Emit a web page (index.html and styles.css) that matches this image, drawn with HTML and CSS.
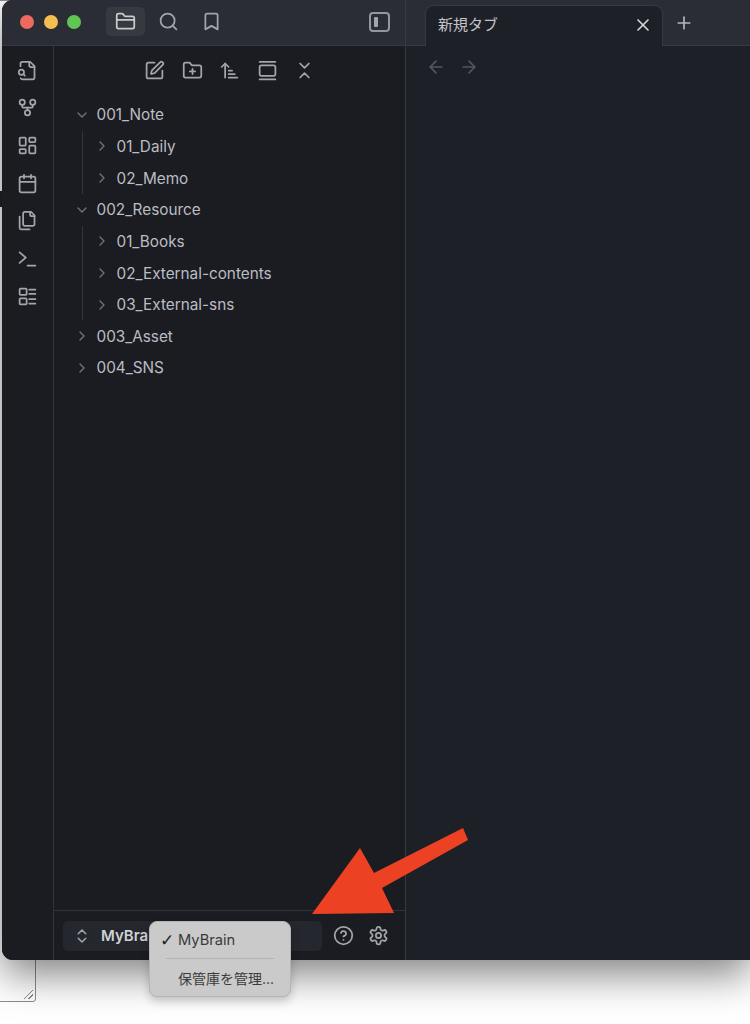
FILE: index.html
```html
<!DOCTYPE html>
<html lang="ja">
<head>
    <meta charset="UTF-8">
    <title>MyBrain - Obsidian</title>
    <link rel="stylesheet" href="styles.css">
</head>
<body>
    <svg class="defs" aria-hidden="true">
        <symbol id="i-folder" viewBox="0 0 24 24"><path d="M20 20a2 2 0 0 0 2-2V8a2 2 0 0 0-2-2h-7.9a2 2 0 0 1-1.69-.9L9.6 3.9A2 2 0 0 0 7.93 3H4a2 2 0 0 0-2 2v13a2 2 0 0 0 2 2Z"/><path d="M2 10h20"/></symbol>
        <symbol id="i-search" viewBox="0 0 24 24"><circle cx="11" cy="11" r="8"/><path d="m21 21-4.3-4.3"/></symbol>
        <symbol id="i-bookmark" viewBox="0 0 24 24"><path d="m19 21-7-4-7 4V5a2 2 0 0 1 2-2h10a2 2 0 0 1 2 2v16z"/></symbol>
        <symbol id="i-file-search" viewBox="0 0 24 24"><path d="M14 2v4a2 2 0 0 0 2 2h4"/><path d="M4.268 21a2 2 0 0 0 1.727 1H18a2 2 0 0 0 2-2V7l-5-5H6a2 2 0 0 0-2 2v3"/><path d="m9 18-1.5-1.5"/><circle cx="5" cy="14" r="3"/></symbol>
        <symbol id="i-fork" viewBox="0 0 24 24"><circle cx="12" cy="18" r="3"/><circle cx="6" cy="6" r="3"/><circle cx="18" cy="6" r="3"/><path d="M18 9v2c0 .6-.4 1-1 1H7c-.6 0-1-.4-1-1V9"/><path d="M12 12v3"/></symbol>
        <symbol id="i-dashboard" viewBox="0 0 24 24"><rect width="7" height="9" x="3" y="3" rx="1"/><rect width="7" height="5" x="14" y="3" rx="1"/><rect width="7" height="9" x="14" y="12" rx="1"/><rect width="7" height="5" x="3" y="16" rx="1"/></symbol>
        <symbol id="i-calendar" viewBox="0 0 24 24"><path d="M8 2v4"/><path d="M16 2v4"/><rect width="18" height="18" x="3" y="4" rx="2"/><path d="M3 10h18"/></symbol>
        <symbol id="i-files" viewBox="0 0 24 24"><path d="M20 7h-3a2 2 0 0 1-2-2V2"/><path d="M9 18a2 2 0 0 1-2-2V4a2 2 0 0 1 2-2h7l4 4v10a2 2 0 0 1-2 2Z"/><path d="M3 7.6v12.8A1.6 1.6 0 0 0 4.6 22h9.8"/></symbol>
        <symbol id="i-terminal" viewBox="0 0 24 24"><path d="m3 17 7-6-7-6"/><path d="M12 20h9"/></symbol>
        <symbol id="i-list" viewBox="0 0 24 24"><rect width="8" height="7" x="3" y="3" rx="1"/><rect width="8" height="7" x="3" y="14" rx="1"/><path d="M14 4h7"/><path d="M14 9h7"/><path d="M14 15h7"/><path d="M14 20h7"/></symbol>
        <symbol id="i-pen" viewBox="0 0 24 24"><path d="M12 3H5a2 2 0 0 0-2 2v14a2 2 0 0 0 2 2h14a2 2 0 0 0 2-2v-7"/><path d="M18.375 2.625a1 1 0 0 1 3 3l-9.013 9.014a2 2 0 0 1-.853.505l-2.873.84a.5.5 0 0 1-.62-.62l.84-2.873a2 2 0 0 1 .506-.852z"/></symbol>
        <symbol id="i-folder-plus" viewBox="0 0 24 24"><path d="M12 10v6"/><path d="M9 13h6"/><path d="M20 20a2 2 0 0 0 2-2V8a2 2 0 0 0-2-2h-7.9a2 2 0 0 1-1.69-.9L9.6 3.9A2 2 0 0 0 7.93 3H4a2 2 0 0 0-2 2v13a2 2 0 0 0 2 2Z"/></symbol>
        <symbol id="i-sort" viewBox="0 0 24 24"><path d="m3 8 4-4 4 4"/><path d="M7 4v16"/><path d="M11 12h4"/><path d="M11 16h7"/><path d="M11 20h10"/></symbol>
        <symbol id="i-gallery" viewBox="0 0 24 24"><path d="M3 2h18"/><rect width="18" height="12" x="3" y="6" rx="2"/><path d="M3 22h18"/></symbol>
        <symbol id="i-collapse" viewBox="0 0 24 24"><path d="m7 20 5-5 5 5"/><path d="m7 4 5 5 5-5"/></symbol>
        <symbol id="i-updown" viewBox="0 0 24 24"><path d="m7 15 5 5 5-5"/><path d="m7 9 5-5 5 5"/></symbol>
        <symbol id="i-help" viewBox="0 0 24 24"><circle cx="12" cy="12" r="10"/><path d="M9.09 9a3 3 0 0 1 5.83 1c0 2-3 3-3 3"/><path d="M12 17h.01"/></symbol>
        <symbol id="i-gear" viewBox="0 0 24 24"><path d="M12.22 2h-.44a2 2 0 0 0-2 2v.18a2 2 0 0 1-1 1.73l-.43.25a2 2 0 0 1-2 0l-.15-.08a2 2 0 0 0-2.73.73l-.22.38a2 2 0 0 0 .73 2.73l.15.1a2 2 0 0 1 1 1.72v.51a2 2 0 0 1-1 1.74l-.15.09a2 2 0 0 0-.73 2.73l.22.38a2 2 0 0 0 2.73.73l.15-.08a2 2 0 0 1 2 0l.43.25a2 2 0 0 1 1 1.73V20a2 2 0 0 0 2 2h.44a2 2 0 0 0 2-2v-.18a2 2 0 0 1 1-1.73l.43-.25a2 2 0 0 1 2 0l.15.08a2 2 0 0 0 2.73-.73l.22-.39a2 2 0 0 0-.73-2.73l-.15-.08a2 2 0 0 1-1-1.74v-.5a2 2 0 0 1 1-1.74l.15-.09a2 2 0 0 0 .73-2.73l-.22-.38a2 2 0 0 0-2.73-.73l-.15.08a2 2 0 0 1-2 0l-.43-.25a2 2 0 0 1-1-1.73V4a2 2 0 0 0-2-2z"/><circle cx="12" cy="12" r="3"/></symbol>
        <symbol id="i-right" viewBox="0 0 24 24"><path d="m9 18 6-6-6-6"/></symbol>
        <symbol id="i-down" viewBox="0 0 24 24"><path d="m6 9 6 6 6-6"/></symbol>
        <symbol id="i-x" viewBox="0 0 24 24"><path d="M18 6 6 18"/><path d="m6 6 12 12"/></symbol>
        <symbol id="i-plus" viewBox="0 0 24 24"><path d="M5 12h14"/><path d="M12 5v14"/></symbol>
        <symbol id="i-back" viewBox="0 0 24 24"><path d="m12 19-7-7 7-7"/><path d="M19 12H5"/></symbol>
        <symbol id="i-forward" viewBox="0 0 24 24"><path d="M5 12h14"/><path d="m12 5 7 7-7 7"/></symbol>
    </svg>

    <!-- window behind -->
    <div class="back-window"><span class="back-mark"></span><span class="grip"></span></div>

    <div class="window">
        <header class="titlebar">
            <div class="title-left">
                <div class="lights">
                    <span class="light red"></span>
                    <span class="light yellow"></span>
                    <span class="light green"></span>
                </div>
                <div class="tab-buttons">
                    <span class="tab-btn active"><svg class="icon i21"><use href="#i-folder"/></svg></span>
                    <span class="tab-btn"><svg class="icon i21"><use href="#i-search"/></svg></span>
                    <span class="tab-btn"><svg class="icon i21"><use href="#i-bookmark"/></svg></span>
                </div>
                <span class="side-toggle"><span class="side-toggle-bar"></span></span>
            </div>
            <div class="title-right">
                <div class="tab">
                    <span class="tab-title">新規タブ</span>
                    <svg class="icon i20 bright"><use href="#i-x"/></svg>
                </div>
                <svg class="icon i20 new-tab"><use href="#i-plus"/></svg>
            </div>
        </header>

        <div class="main">
            <nav class="ribbon">
                <svg class="icon i21"><use href="#i-file-search"/></svg>
                <svg class="icon i21"><use href="#i-fork"/></svg>
                <svg class="icon i21"><use href="#i-dashboard"/></svg>
                <svg class="icon i21"><use href="#i-calendar"/></svg>
                <svg class="icon i21"><use href="#i-files"/></svg>
                <svg class="icon i21"><use href="#i-terminal"/></svg>
                <svg class="icon i21"><use href="#i-list"/></svg>
            </nav>

            <aside class="sidebar">
                <div class="toolbar">
                    <svg class="icon i21"><use href="#i-pen"/></svg>
                    <svg class="icon i21"><use href="#i-folder-plus"/></svg>
                    <svg class="icon i21"><use href="#i-sort"/></svg>
                    <svg class="icon i21"><use href="#i-gallery"/></svg>
                    <svg class="icon i21"><use href="#i-collapse"/></svg>
                </div>

                <div class="tree">
                    <div class="row"><svg class="icon i16 chev"><use href="#i-down"/></svg>001_Note</div>
                    <div class="children">
                        <div class="row"><svg class="icon i16 chev"><use href="#i-right"/></svg>01_Daily</div>
                        <div class="row"><svg class="icon i16 chev"><use href="#i-right"/></svg>02_Memo</div>
                    </div>
                    <div class="row"><svg class="icon i16 chev"><use href="#i-down"/></svg>002_Resource</div>
                    <div class="children">
                        <div class="row"><svg class="icon i16 chev"><use href="#i-right"/></svg>01_Books</div>
                        <div class="row"><svg class="icon i16 chev"><use href="#i-right"/></svg>02_External-contents</div>
                        <div class="row"><svg class="icon i16 chev"><use href="#i-right"/></svg>03_External-sns</div>
                    </div>
                    <div class="row"><svg class="icon i16 chev"><use href="#i-right"/></svg>003_Asset</div>
                    <div class="row"><svg class="icon i16 chev"><use href="#i-right"/></svg>004_SNS</div>
                </div>

                <div class="vault-bar">
                    <div class="vault">
                        <svg class="icon i18"><use href="#i-updown"/></svg>
                        <span class="vault-name">MyBrain</span>
                    </div>
                    <svg class="icon i21"><use href="#i-help"/></svg>
                    <svg class="icon i21"><use href="#i-gear"/></svg>
                </div>
            </aside>

            <section class="content">
                <div class="nav-arrows">
                    <svg class="icon i20"><use href="#i-back"/></svg>
                    <svg class="icon i20"><use href="#i-forward"/></svg>
                </div>
            </section>
        </div>
    </div>

    <div class="menu">
        <div class="menu-item"><span class="check">✓</span>MyBrain</div>
        <div class="menu-sep"></div>
        <div class="menu-item menu-item-ja">保管庫を管理...</div>
    </div>

    <svg class="arrow" viewBox="0 0 170 100" width="170" height="100">
        <polygon points="2,86 50,20 64,45 153,0 158,12 72,60 84,85"/>
    </svg>
</body>
</html>
```

FILE: styles.css
```css
html, body {
    height: 100%;
}

body {
    margin: 0;
    position: relative;
    overflow: hidden;
    background-color: #fff;
    font-family: Inter, "Noto Sans CJK JP", sans-serif;
    font-size: 15.3px;
    color: #bcbdc2;
}

.defs {
    display: none;
}

.icon {
    display: block;
    flex: none;
    fill: none;
    stroke: #a3a5aa;
    stroke-width: 2;
    stroke-linecap: round;
    stroke-linejoin: round;
}

.i16 { width: 16px; height: 16px; }
.i18 { width: 18px; height: 18px; }
.i20 { width: 20px; height: 20px; }
.i21 { width: 21px; height: 21px; }

.bright {
    stroke: #d4d5d8;
}

/* the window behind */
.back-window {
    position: absolute;
    left: -10px;
    top: 0;
    width: 46px;
    height: 1002px;
    box-sizing: border-box;
    border: 1px solid #8d8d8d;
    border-radius: 3px;
    background-color: #fff;
}

.back-mark {
    position: absolute;
    left: 9px;
    top: 190px;
    width: 3px;
    height: 16px;
    background-color: #222;
}

.grip {
    position: absolute;
    right: 2px;
    bottom: 2px;
    width: 9px;
    height: 9px;
    background: linear-gradient(135deg, transparent 45%, #888 45%, #888 55%, transparent 55%, transparent 70%, #888 70%, #888 80%, transparent 80%);
}

.window {
    position: relative;
    margin-left: 2px;
    height: 960px;
    display: flex;
    flex-direction: column;
    overflow: hidden;
    border-radius: 11px 0 0 11px;
    background-color: #1e2028;
    box-shadow: 0 14px 40px rgba(0, 0, 0, 0.5);
}

/* title bar */
.titlebar {
    display: flex;
    height: 46px;
    flex: none;
    background-color: #2a2d35;
}

.title-left {
    width: 404px;
    box-sizing: border-box;
    display: flex;
    align-items: center;
    padding: 0 15px 2px 18px;
    border-right: 1px solid #363940;
    border-bottom: 1px solid #363940;
}

.lights {
    display: flex;
    gap: 9.5px;
}

.light {
    width: 14px;
    height: 14px;
    border-radius: 50%;
}

.red { background-color: #ee6a5f; }
.yellow { background-color: #f5bf4f; }
.green { background-color: #61c554; }

.tab-buttons {
    display: flex;
    align-items: center;
    gap: 4px;
    margin-left: 25px;
}

.tab-btn {
    width: 39px;
    height: 29px;
    display: flex;
    align-items: center;
    justify-content: center;
    border-radius: 5px;
}

.tab-btn.active {
    background-color: #363940;
}

.tab-btn.active .icon {
    stroke: #c9cacd;
}

.side-toggle {
    margin-left: auto;
    width: 21px;
    height: 20px;
    box-sizing: border-box;
    padding: 3px;
    border: 2px solid #93969c;
    border-radius: 4px;
}

.side-toggle-bar {
    display: block;
    width: 4px;
    height: 100%;
    border-radius: 1px;
    background-color: #a3a5aa;
}

.title-right {
    flex: 1;
    display: flex;
    align-items: flex-end;
    padding-left: 20px;
    border-bottom: 1px solid #363940;
}

.tab {
    width: 236px;
    height: 40px;
    margin-bottom: -1px;
    box-sizing: border-box;
    display: flex;
    align-items: center;
    justify-content: space-between;
    padding: 0 9px 3px 12px;
    border-radius: 8px 8px 0 0;
    background-color: #1e2028;
    box-shadow: 0 0 0 1px #363940;
    clip-path: inset(-1px -1px 0 -1px);
}

.tab-title {
    margin-bottom: 2px;
    font-size: 15px;
    color: #c4c5c9;
}

.new-tab {
    margin: 0 0 12px 12px;
    stroke: #b4b5b9;
}

/* body of the window */
.main {
    flex: 1;
    min-height: 0;
    display: flex;
}

.ribbon {
    width: 52px;
    flex: none;
    box-sizing: border-box;
    display: flex;
    flex-direction: column;
    align-items: center;
    gap: 16.7px;
    padding-top: 13.5px;
    padding-right: 1px;
    border-right: 1px solid #30333a;
    background-color: #1a1c22;
}

.sidebar {
    width: 352px;
    flex: none;
    box-sizing: border-box;
    display: flex;
    flex-direction: column;
    border-right: 1px solid #363940;
    background-color: #1a1c22;
}

.toolbar {
    display: flex;
    justify-content: center;
    gap: 16.5px;
    padding: 13.5px 0 0;
    height: 33px;
    box-sizing: border-box;
}

.tree {
    padding: 20px 0 0 20px;
}

.row {
    display: flex;
    align-items: center;
    gap: 6.5px;
    height: 31.65px;
    white-space: nowrap;
}

.chev {
    stroke: #6e727a;
}

.children {
    margin-left: 8px;
    padding-left: 11px;
    border-left: 1px solid #30333a;
}

.vault-bar {
    margin-top: auto;
    height: 50px;
    box-sizing: border-box;
    display: flex;
    align-items: center;
    gap: 14px;
    padding: 0 16px 0 9px;
    border-top: 1px solid #30333a;
}

.vault {
    flex: 1;
    height: 30px;
    margin-right: -3px;
    display: flex;
    align-items: center;
    gap: 10px;
    padding-left: 10px;
    border-radius: 5px;
    background-color: #25272e;
}

.vault-name {
    font-size: 15px;
    font-weight: 600;
    color: #d0d1d4;
}

.content {
    flex: 1;
}

.nav-arrows {
    display: flex;
    gap: 13px;
    padding: 11px 0 0 20px;
}

.nav-arrows .icon {
    stroke: #54575e;
}

/* vault popup */
.menu {
    position: absolute;
    left: 149px;
    top: 921px;
    width: 142px;
    height: 76px;
    box-sizing: border-box;
    padding: 4px 16px;
    border-radius: 8px;
    border: 1px solid #b4b5b4;
    background-color: #c9cac9;
    box-shadow: 0 4px 10px rgba(0, 0, 0, 0.2);
    color: #3a3a3c;
    font-size: 14.7px;
}

.menu-item {
    position: relative;
    height: 28px;
    padding-left: 12px;
    display: flex;
    align-items: center;
    white-space: nowrap;
}

.menu-item-ja {
    font-size: 14px;
}

.check {
    position: absolute;
    left: -6px;
    font-family: "DejaVu Sans", sans-serif;
    font-size: 17px;
    font-weight: bold;
    color: #222;
}

.menu-sep {
    height: 1px;
    margin: 4px 0 5px;
    background-color: #b2b3b2;
}

/* annotation */
.arrow {
    position: absolute;
    left: 310px;
    top: 828px;
}

.arrow polygon {
    fill: #ec4223;
}
```
